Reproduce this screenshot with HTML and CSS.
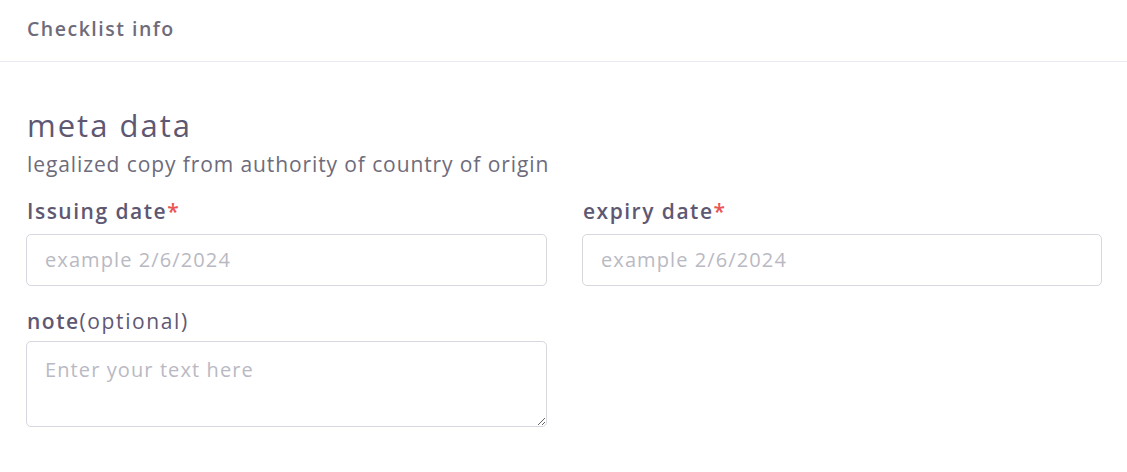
FILE: index.html
```html
<!DOCTYPE html>
<html>
<head>
<meta charset="utf-8">
<link rel="stylesheet" href="styles.css">
</head>
<body>
<div class="card">
  <div class="card-header">Checklist info</div>
  <div class="card-body">
    <h2 class="title">meta data</h2>
    <p class="subtitle">legalized copy from authority of country of origin</p>
    <div class="grid">
      <div class="field">
        <label class="label">Issuing date<span class="req">*</span></label>
        <input class="input" type="text" placeholder="example 2/6/2024">
      </div>
      <div class="field">
        <label class="label">expiry date<span class="req">*</span></label>
        <input class="input" type="text" placeholder="example 2/6/2024">
      </div>
      <div class="field">
        <label class="label label-note">note<span class="opt">(optional)</span></label>
        <textarea class="textarea" placeholder="Enter your text here"></textarea>
      </div>
    </div>
  </div>
</div>
</body>
</html>
```
FILE: styles.css
```css
* { box-sizing: border-box; }
html, body { margin: 0; padding: 0; background: #fff; }
body { font-family: "Open Sans", "Noto Sans", sans-serif; color: #6e6b7b; }
.card { width: 1127px; }
.card-header {
  height: 62px;
  padding: 15px 27px 0;
  font-size: 19.5px;
  line-height: 27px;
  font-weight: 600;
  letter-spacing: 1.5px;
  color: #6e6b7b;
  border-bottom: 1px solid #ebe9f1;
}
.card-body { padding: 40px 25px 0 26px; }
.title {
  margin: 0;
  font-size: 31px;
  font-weight: 400;
  letter-spacing: 2px;
  color: #5e5873;
  line-height: 46px;
  padding-left: 1px;
}
.subtitle {
  margin: 2px 0 0;
  font-size: 21px;
  line-height: 28px;
  letter-spacing: 0.9px;
  color: #6e6b7b;
  padding-left: 1px;
}
.grid {
  display: grid;
  grid-template-columns: 521px 520px;
  column-gap: 35px;
  row-gap: 19px;
  margin-top: 19px;
}
.field { display: flex; flex-direction: column; }
.label {
  font-size: 21px;
  font-weight: 600;
  letter-spacing: 1.5px;
  color: #5e5873;
  line-height: 28px;
  margin-bottom: 9px;
  padding-left: 1px;
}
.label-note { margin-top: 2px; margin-bottom: 6px; }
.req { color: #ea5455; font-weight: 600; letter-spacing: 0; }
.opt { font-weight: 400; letter-spacing: 1.6px; }
.input, .textarea {
  font-family: inherit;
  font-size: 20px;
  letter-spacing: 1.1px;
  color: #6e6b7b;
  border: 1px solid #d8d6de;
  border-radius: 5px;
  padding: 0 18px;
  outline: none;
  background: #fff;
}
.input { height: 52px; padding-bottom: 2px; }
.textarea { height: 86px; padding-top: 14px; resize: vertical; }
.input::placeholder, .textarea::placeholder { color: #b9b9c3; }
```
